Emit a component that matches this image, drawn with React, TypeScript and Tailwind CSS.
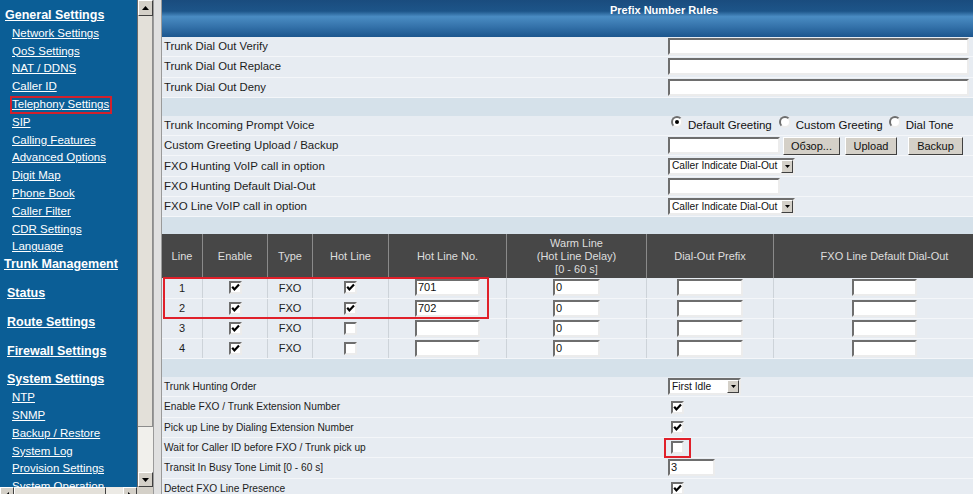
import clsx from 'clsx'
import type { ReactNode } from 'react'

const sunken = 'border-2 border-t-[#6e6e6e] border-l-[#6e6e6e] border-r-[#ececec] border-b-[#ececec] bg-white'
const raised = 'border border-t-[#ffffff] border-l-[#ffffff] border-r-[#404040] border-b-[#404040] bg-[#d4d0c8]'

const generalLinks = [
  'Network Settings',
  'QoS Settings',
  'NAT / DDNS',
  'Caller ID',
  'Telephony Settings',
  'SIP',
  'Calling Features',
  'Advanced Options',
  'Digit Map',
  'Phone Book',
  'Caller Filter',
  'CDR Settings',
  'Language',
]

const systemLinks = ['NTP', 'SNMP', 'Backup / Restore', 'System Log', 'Provision Settings', 'System Operation']

const lines = [
  { no: '1', hot: true, hotNo: '701' },
  { no: '2', hot: true, hotNo: '702' },
  { no: '3', hot: false, hotNo: '' },
  { no: '4', hot: false, hotNo: '' },
]

function Field({ className, value }: { className: string; value?: string }) {
  return (
    <div className={clsx('h-[17px] pl-[1px] text-[11px] leading-[13px] text-[#111]', sunken, className)}>{value}</div>
  )
}

function Check({ on }: { on?: boolean }) {
  return (
    <span className={clsx('inline-flex h-[13px] w-[13px] shrink-0 items-center justify-center', sunken)}>
      {on && (
        <svg width="9" height="9" viewBox="0 0 9 9">
          <polyline points="1.2,3.8 3.4,6.4 8,1.4" fill="none" stroke="#000" strokeWidth="2.2" />
        </svg>
      )}
    </span>
  )
}

function Radio({ on }: { on?: boolean }) {
  return (
    <span className="mb-[8px] inline-flex h-[12px] w-[12px] shrink-0 items-center justify-center rounded-full border-2 border-t-[#6e6e6e] border-l-[#6e6e6e] border-r-[#ececec] border-b-[#ececec] bg-white">
      {on && <span className="h-[4px] w-[4px] rounded-full bg-black" />}
    </span>
  )
}

function Btn({ className, children }: { className: string; children: ReactNode }) {
  return (
    <div className={clsx('flex h-[18px] items-center justify-center text-[11px] text-[#111]', raised, className)}>
      {children}
    </div>
  )
}

function Select({ className, value }: { className: string; value: string }) {
  return (
    <div className={clsx('flex h-[17px] items-center', sunken, className)}>
      <span className="flex-1 truncate pl-[2px] text-[10.2px] leading-none text-[#111]">{value}</span>
      <span className={clsx('flex h-[13px] w-[12px] items-center justify-center', raised)}>
        <svg width="5" height="3" viewBox="0 0 5 3">
          <path d="M0 0h5L2.5 3z" fill="#000" />
        </svg>
      </span>
    </div>
  )
}

function Row({ label, size, children }: { label: string; size: string; children?: ReactNode }) {
  return (
    <div className="flex h-[20.3px] items-center border-b border-[#f4f6f9] bg-[#e7ecf2] text-[#1c1c1c]">
      <div className={clsx('w-[506px] shrink-0 pl-[2px]', size)}>{label}</div>
      <div className="flex flex-1 items-center">{children}</div>
    </div>
  )
}

function Arrow({ dir }: { dir: 'up' | 'down' | 'left' | 'right' }) {
  const d = {
    up: 'M0 4h7L3.5 0z',
    down: 'M0 0h7L3.5 4z',
    left: 'M4 0v7L0 3.5z',
    right: 'M0 0v7L4 3.5z',
  }[dir]
  const vertical = dir === 'up' || dir === 'down'
  return (
    <svg width={vertical ? 7 : 4} height={vertical ? 4 : 7} viewBox={vertical ? '0 0 7 4' : '0 0 4 7'}>
      <path d={d} fill="#000" />
    </svg>
  )
}

function Sidebar() {
  const heading = 'block h-[17.8px] text-[12.5px] font-bold leading-[17.8px] underline'
  const item = 'block h-[17.8px] pl-[12px] text-[11.5px] leading-[17.8px] underline'
  return (
    <aside className="flex w-[153px] shrink-0 flex-col">
      <div className="flex h-[487px] shrink-0">
        <nav className="w-[137px] overflow-hidden bg-[#0b5e96] pt-[7px] text-white">
          <a className={clsx(heading, 'pl-[5px]')}>General Settings</a>
          {generalLinks.map((name) =>
            name === 'Telephony Settings' ? (
              <div key={name} className="flex h-[17.8px] items-center pl-[10px]">
                <span className="block border-2 border-[#d3202c] pr-[1px] text-[11.5px] leading-[13.8px] underline">
                  {name}
                </span>
              </div>
            ) : (
              <a key={name} className={item}>
                {name}
              </a>
            ),
          )}
          <a className={clsx(heading, 'pl-[4px]')}>Trunk Management</a>
          <a className={clsx(heading, 'mt-[11px] pl-[7px]')}>Status</a>
          <a className={clsx(heading, 'mt-[11px] pl-[7px]')}>Route Settings</a>
          <a className={clsx(heading, 'mt-[11px] pl-[7px]')}>Firewall Settings</a>
          <a className={clsx(heading, 'mt-[11px] pl-[7px]')}>System Settings</a>
          {systemLinks.map((name) => (
            <a key={name} className={item}>
              {name}
            </a>
          ))}
        </nav>
        {/* vertical scrollbar */}
        <div className="flex w-[16px] flex-col border-l border-[#6a6a6a] bg-[#eceae5]">
          <div className={clsx('flex h-[16px] items-center justify-center', raised)}>
            <Arrow dir="up" />
          </div>
          <div className="flex-1 border-b border-r border-[#8c8c8c] bg-[#e3e0d9]" />
          <div className="h-[45px] bg-[#f1f0ec]" />
          <div className={clsx('flex h-[15px] items-center justify-center', raised)}>
            <Arrow dir="down" />
          </div>
        </div>
      </div>
      {/* horizontal scrollbar */}
      <div className="flex h-[16px] shrink-0 bg-[#eceae5]">
        <div className={clsx('flex w-[14px] items-center justify-center', raised)}>
          <Arrow dir="left" />
        </div>
        <div className={clsx('w-[92px]', raised, 'bg-[#e3e0d9]')} />
        <div className="flex-1" />
        <div className={clsx('flex w-[14px] items-center justify-center', raised)}>
          <Arrow dir="right" />
        </div>
        <div className="w-[16px] bg-[#d4d0c8]" />
      </div>
    </aside>
  )
}

function LinesTable() {
  const head = 'flex items-center justify-center border-r border-[#8a8a8a] text-center text-[11px] leading-[13px] text-[#dedede]'
  const cell = 'flex items-center justify-center border-r border-[#cdd3d9]'
  const cols = 'grid grid-cols-[41px_65px_45px_76px_118px_140px_127px_222px]'
  return (
    <div className="w-[834px]">
      <div className={clsx(cols, 'h-[44px] bg-[#474747]')}>
        <div className={head}>Line</div>
        <div className={head}>Enable</div>
        <div className={head}>Type</div>
        <div className={head}>Hot Line</div>
        <div className={head}>Hot Line No.</div>
        <div className={head}>
          Warm Line
          <br />
          (Hot Line Delay)
          <br />
          [0 - 60 s]
        </div>
        <div className={head}>Dial-Out Prefix</div>
        <div className={head}>FXO Line Default Dial-Out</div>
      </div>
      <div className="relative">
        {lines.map((l) => (
          <div
            key={l.no}
            className={clsx(cols, 'h-[20.2px] border-b border-[#f4f6f9] bg-[#e7ecf2] text-[11px] text-[#1c1c1c]')}
          >
            <div className={cell}>{l.no}</div>
            <div className={cell}>
              <Check on />
            </div>
            <div className={cell}>FXO</div>
            <div className={cell}>
              <Check on={l.hot} />
            </div>
            <div className={cell}>
              <Field className="w-[65px]" value={l.hotNo} />
            </div>
            <div className={cell}>
              <Field className="w-[47px]" value="0" />
            </div>
            <div className={cell}>
              <Field className="w-[66px]" />
            </div>
            <div className={cell}>
              <Field className="w-[65px]" />
            </div>
          </div>
        ))}
        {/* highlight around lines 1-2 */}
        <div className="pointer-events-none absolute left-[1px] top-[-1px] h-[42px] w-[326px] border-2 border-[#e0202a]" />
      </div>
    </div>
  )
}

export default function App() {
  const top = 'text-[11.3px]'
  const mid = 'text-[11.5px]'
  const low = 'text-[10.2px]'
  return (
    <div className="flex h-[494px] w-[973px] overflow-hidden bg-white font-['Liberation_Sans',Arial,sans-serif]">
      <Sidebar />
      <div className="w-[9px] shrink-0 border-x border-[#9a9a9a] bg-[#e0e0e0]" />

      <main className="min-w-0 flex-1 overflow-hidden bg-[#d5e1ea]">
        <div className="h-[37px] bg-[linear-gradient(to_bottom,#1a4c7e_0%,#1d5589_30%,#4a8cc3_45%,#3a79b1_65%,#1c568e_100%)] pl-[448px] pt-[2px] text-[11px] font-bold text-white">
          Prefix Number Rules
        </div>

        <Row label="Trunk Dial Out Verify" size={top}>
          <Field className="w-[301px]" />
        </Row>
        <Row label="Trunk Dial Out Replace" size={top}>
          <Field className="w-[301px]" />
        </Row>
        <Row label="Trunk Dial Out Deny" size={top}>
          <Field className="w-[301px]" />
        </Row>

        <div className="h-[18px]" />

        <Row label="Trunk Incoming Prompt Voice" size={mid}>
          <div className="flex items-center pl-[3px] text-[11.5px] text-[#111]">
            <Radio on />
            <span className="ml-[5px]">Default Greeting</span>
            <span className="ml-[7px] flex items-center">
              <Radio />
            </span>
            <span className="ml-[5px]">Custom Greeting</span>
            <span className="ml-[6px] flex items-center">
              <Radio />
            </span>
            <span className="ml-[5px]">Dial Tone</span>
          </div>
        </Row>
        <Row label="Custom Greeting Upload / Backup" size={mid}>
          <Field className="w-[112px]" />
          <Btn className="ml-[3px] w-[57px]">Обзор...</Btn>
          <Btn className="ml-[5px] w-[52px]">Upload</Btn>
          <Btn className="ml-[11px] w-[55px]">Backup</Btn>
        </Row>
        <Row label="FXO Hunting VoIP call in option" size={mid}>
          <Select className="w-[127px]" value="Caller Indicate Dial-Out" />
        </Row>
        <Row label="FXO Hunting Default Dial-Out" size={mid}>
          <Field className="w-[112px]" />
        </Row>
        <Row label="FXO Line VoIP call in option" size={mid}>
          <Select className="w-[127px]" value="Caller Indicate Dial-Out" />
        </Row>

        <div className="h-[17px]" />

        <LinesTable />

        <div className="h-[18px]" />

        <Row label="Trunk Hunting Order" size={low}>
          <Select className="w-[73px]" value="First Idle" />
        </Row>
        <Row label="Enable FXO / Trunk Extension Number" size={low}>
          <span className="ml-[3px] flex">
            <Check on />
          </span>
        </Row>
        <Row label="Pick up Line by Dialing Extension Number" size={low}>
          <span className="ml-[3px] flex">
            <Check on />
          </span>
        </Row>
        <Row label="Wait for Caller ID before FXO / Trunk pick up" size={low}>
          <span className="relative ml-[3px] flex">
            <Check />
            <span className="absolute left-[-7px] top-[-3px] h-[20px] w-[27px] border-2 border-[#e0202a]" />
          </span>
        </Row>
        <Row label="Transit In Busy Tone Limit [0 - 60 s]" size={low}>
          <Field className="w-[47px]" value="3" />
        </Row>
        <Row label="Detect FXO Line Presence" size={low}>
          <span className="ml-[3px] flex">
            <Check on />
          </span>
        </Row>
      </main>
    </div>
  )
}
